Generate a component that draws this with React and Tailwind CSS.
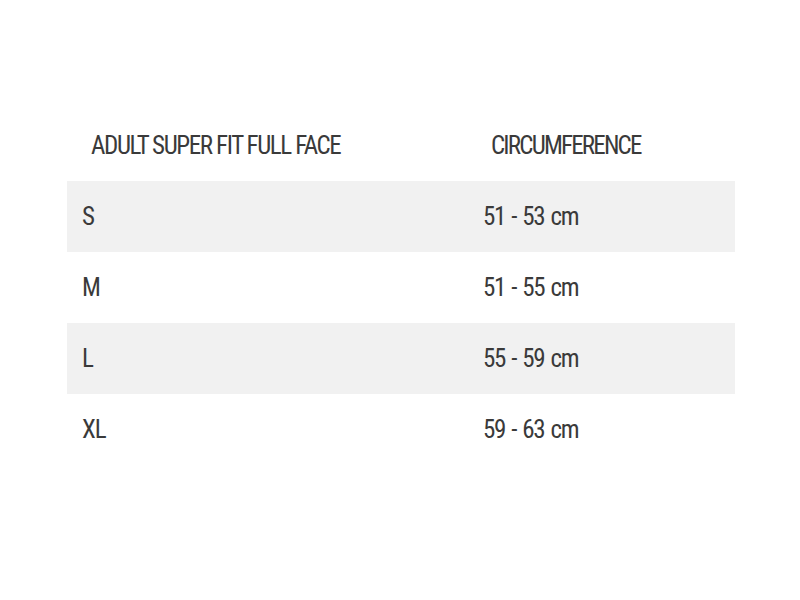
const rows = [
  { size: "S", range: "51 - 53 cm" },
  { size: "M", range: "51 - 55 cm" },
  { size: "L", range: "55 - 59 cm" },
  { size: "XL", range: "59 - 63 cm" },
];

const App = () => {
  return (
    <section className="min-h-screen w-full bg-white pt-[110px] pl-[67px] pr-[65px] text-[#3a3a3a] font-['Roboto_Condensed','Liberation_Sans',sans-serif]">
      <table className="w-full border-collapse text-[25px] leading-none font-normal">
        <thead>
          <tr className="h-[71px]">
            <th className="w-[400px] pl-[24px] text-left font-normal tracking-[-1.4px]">
              ADULT SUPER FIT FULL FACE
            </th>
            <th className="pl-[24px] text-left font-normal tracking-[-1.8px]">
              CIRCUMFERENCE
            </th>
          </tr>
        </thead>
        <tbody>
          {rows.map((row, i) => (
            <tr
              key={row.size}
              className={i % 2 === 0 ? "h-[71px] bg-[#f1f1f1]" : "h-[71px] bg-white"}
            >
              <td className="pl-[15px] tracking-[-1px]">{row.size}</td>
              <td className="pl-[16px] tracking-[-1.4px] [word-spacing:2px]">{row.range}</td>
            </tr>
          ))}
        </tbody>
      </table>
    </section>
  );
};

export default App;
